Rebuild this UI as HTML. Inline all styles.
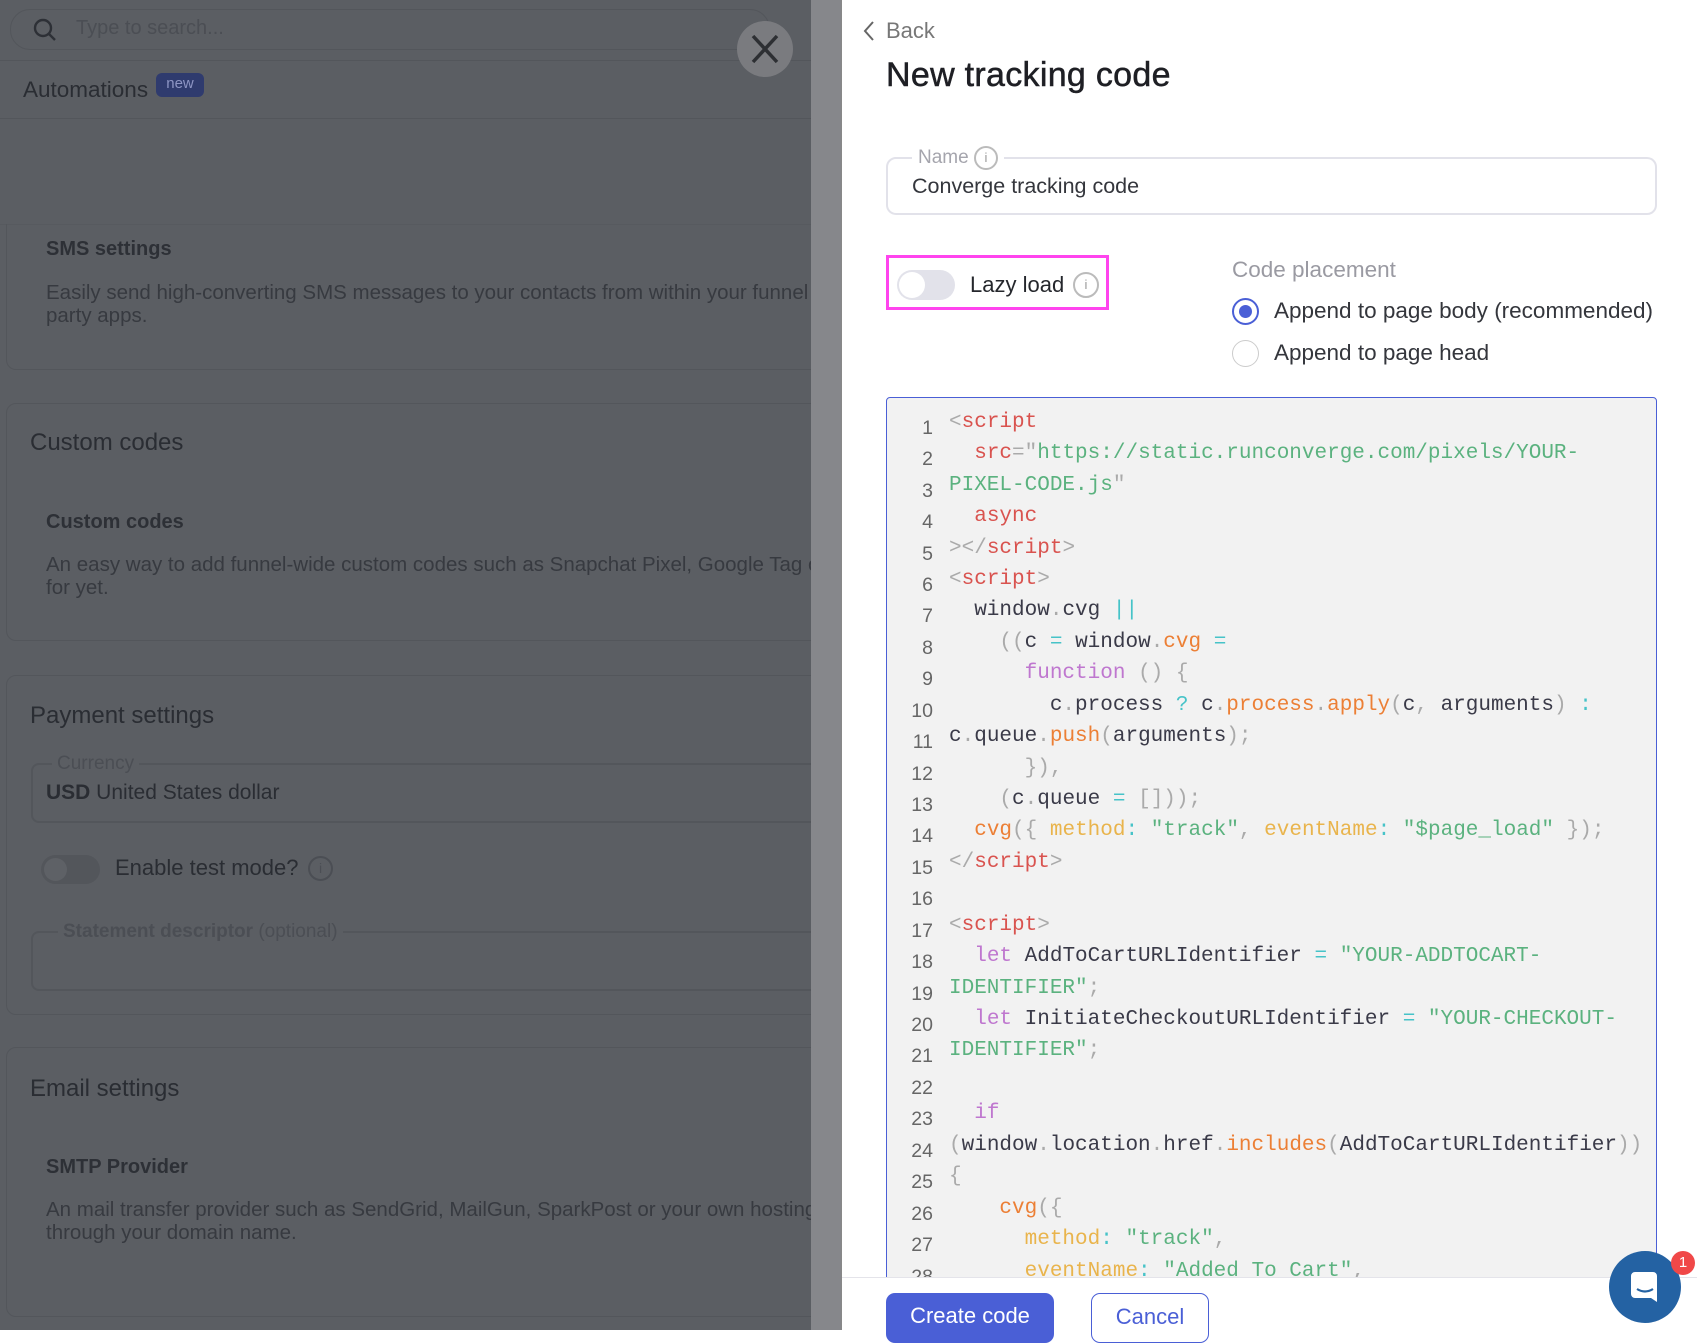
<!DOCTYPE html>
<html style="background:#fff"><head><meta charset="utf-8"><style>
*{margin:0;padding:0;box-sizing:border-box}
body{width:1697px;height:1330px;overflow:hidden;position:relative;font-family:"Liberation Sans",sans-serif;background:#5b5e63}
.a{position:absolute;white-space:nowrap}
.ov{position:absolute;left:0;top:0;width:811px;height:1330px;background:#5b5e63;color:#2d3036}
.card{position:absolute;left:6px;width:830px;border:1px solid #53565b;border-radius:10px}
.strip{position:absolute;left:811px;top:0;width:30px;height:1330px;background:#86878b}
.panel{position:absolute;left:841px;top:0;width:856px;height:1330px;background:#fff;border-left:1px solid #888}
.code{position:absolute;left:886px;top:397px;width:771px;height:900px;background:#f2f2f2;border:1px solid #4a5fd6;border-radius:4px;overflow:hidden}
.ln{position:absolute;left:0;width:46px;text-align:right;color:#666;font-size:19.5px;font-family:"Liberation Sans",sans-serif}
.cl{position:absolute;left:62px;font-family:"Liberation Mono",monospace;font-size:21px;color:#3a3a48;white-space:pre}
.t{color:#d9534f}.p{color:#aaa}.s{color:#5bb27f}.k{color:#bf77cf}.o{color:#ec7f35}.y{color:#e9b44c}.c{color:#46c3c8}
</style></head><body>
<div class="ov">
 <div class="a" style="left:10px;top:9px;width:760px;height:41px;border:1px solid #53565b;border-radius:20px"></div>
 <svg class="a" style="left:32px;top:17px" width="26" height="26" viewBox="0 0 26 26"><circle cx="11" cy="11" r="8" fill="none" stroke="#2d3036" stroke-width="2.4"/><path d="M17 17l6 6" stroke="#2d3036" stroke-width="2.4"/></svg>
 <div class="a" style="top:17px;font-size:20px;color:#4b4e54;left:76px">Type to search...</div>
 <div class="a" style="left:0;top:60px;width:811px;border-top:1px solid #53565b"></div>
 <div class="a" style="left:23px;top:77px;font-size:22.5px;color:#2a2d33">Automations</div>
 <div class="a" style="left:156px;top:73px;width:48px;height:24px;border-radius:6px;background:#2f3b6e;color:#8d95c3;font-size:15px;text-align:center;line-height:22px">new</div>
 <div class="a" style="left:0;top:118px;width:811px;border-top:1px solid #53565b"></div>
 <div class="a" style="left:0;top:224px;width:811px;border-top:1px solid #575a5f"></div>
 <div class="card" style="top:224px;height:146px;border-top:none;border-radius:0 0 10px 10px"></div>
 <div class="a" style="left:46px;top:238px;font-size:20px;font-weight:bold;color:#2d3036">SMS settings</div>
 <div class="a" style="left:46px;top:281px;font-size:20.5px;line-height:23px;color:#373a40">Easily send high-converting SMS messages to your contacts from within your funnel<br>party apps.</div>
 <div class="card" style="top:403px;height:238px"></div>
 <div class="a" style="left:30px;top:429px;font-size:24px;color:#2a2d33">Custom codes</div>
 <div class="a" style="left:46px;top:511px;font-size:20px;font-weight:bold;color:#2d3036">Custom codes</div>
 <div class="a" style="left:46px;top:553px;font-size:20.5px;line-height:23px;color:#373a40">An easy way to add funnel-wide custom codes such as Snapchat Pixel, Google Tag o<br>for yet.</div>
 <div class="card" style="top:675px;height:340px"></div>
 <div class="a" style="left:30px;top:702px;font-size:24px;color:#2a2d33">Payment settings</div>
 <div class="a" style="left:31px;top:763px;width:800px;height:60px;border:2px solid #53565b;border-radius:8px"></div>
 <div class="a" style="left:52px;top:753px;font-size:19px;color:#4b4e54;background:#5b5e63;padding:0 5px">Currency</div>
 <div class="a" style="left:46px;top:781px;font-size:21px;color:#2a2d33"><b>USD</b> United States dollar</div>
 <div class="a" style="left:41px;top:855px;width:59px;height:29px;border-radius:15px;background:#53565b"></div>
 <div class="a" style="left:44px;top:858px;width:23px;height:23px;border-radius:50%;background:#5e6166"></div>
 <div class="a" style="left:115px;top:855px;font-size:22px;color:#2a2d33">Enable test mode?</div>
 <div class="a" style="left:308px;top:856px;width:25px;height:25px;border:2px solid #4b4e54;border-radius:50%;font-size:14px;text-align:center;line-height:21px;color:#4b4e54">i</div>
 <div class="a" style="left:31px;top:931px;width:800px;height:60px;border:2px solid #53565b;border-radius:8px"></div>
 <div class="a" style="left:58px;top:921px;font-size:19px;color:#4b4e54;background:#5b5e63;padding:0 5px;font-weight:bold">Statement descriptor <span style="font-weight:normal">(optional)</span></div>
 <div class="card" style="top:1047px;height:270px"></div>
 <div class="a" style="left:30px;top:1075px;font-size:24px;color:#2a2d33">Email settings</div>
 <div class="a" style="left:46px;top:1156px;font-size:20px;font-weight:bold;color:#2d3036">SMTP Provider</div>
 <div class="a" style="left:46px;top:1198px;font-size:20.5px;line-height:23px;color:#373a40">An mail transfer provider such as SendGrid, MailGun, SparkPost or your own hosting<br>through your domain name.</div>
 <div class="a" style="left:737px;top:21px;width:56px;height:56px;border-radius:50%;background:#7a7b7f"></div>
 <svg class="a" style="left:747px;top:31px" width="36" height="36" viewBox="0 0 36 36"><path d="M6 5L30 31M30 5L6 31" stroke="#2d2f33" stroke-width="3.5"/></svg>
</div>
<div class="strip"></div>
<div class="panel"></div>
<svg class="a" style="left:862px;top:20px" width="14" height="22" viewBox="0 0 14 22"><path d="M11 2L3 11l8 9" fill="none" stroke="#666" stroke-width="2"/></svg>
<div class="a" style="left:886px;top:18px;font-size:22px;color:#777">Back</div>
<div class="a" style="left:886px;top:56px;font-size:34px;color:#1e1f24;letter-spacing:0.3px;-webkit-text-stroke:0.5px #1e1f24">New tracking code</div>
<div class="a" style="left:886px;top:157px;width:771px;height:58px;border:2px solid #e2e2ea;border-radius:10px"></div>
<div class="a" style="left:912px;top:146px;background:#fff;padding:0 6px;font-size:19px;color:#a5a5ad">Name <span style="display:inline-block;width:24px;height:24px;border:2px solid #bbb;border-radius:50%;font-size:13px;text-align:center;line-height:20px;vertical-align:middle;color:#999">i</span></div>
<div class="a" style="left:912px;top:174px;font-size:21.5px;color:#34363c">Converge tracking code</div>
<div class="a" style="left:886px;top:255px;width:223px;height:55px;border:3px solid #ff44ee"></div>
<div class="a" style="left:897px;top:270px;width:58px;height:30px;border-radius:15px;background:#e2e2ea"></div>
<div class="a" style="left:899px;top:272px;width:26px;height:26px;border-radius:50%;background:#fff"></div>
<div class="a" style="left:970px;top:272px;font-size:22px;color:#25272c">Lazy load</div>
<div class="a" style="left:1073px;top:272px;width:26px;height:26px;border:2px solid #bbb;border-radius:50%;font-size:13px;text-align:center;line-height:22px;color:#999">i</div>
<div class="a" style="left:1232px;top:257px;font-size:22.5px;color:#9a9aa2">Code placement</div>
<div class="a" style="left:1232px;top:298px;width:27px;height:27px;border:2px solid #4a5fd6;border-radius:50%"></div>
<div class="a" style="left:1239px;top:305px;width:13px;height:13px;border-radius:50%;background:#4a5fd6"></div>
<div class="a" style="left:1274px;top:298px;font-size:22.5px;color:#34363c">Append to page body (recommended)</div>
<div class="a" style="left:1232px;top:340px;width:27px;height:27px;border:1.5px solid #ccc;border-radius:50%"></div>
<div class="a" style="left:1274px;top:340px;font-size:22.5px;color:#34363c">Append to page head</div>
<div class="code">
<div class="ln" style="top:19px">1</div><div class="cl" style="top:13px"><span class="p">&lt;</span><span class="t">script</span></div>
<div class="ln" style="top:50px">2</div><div class="cl" style="top:44px">  <span class="t">src</span><span class="p">="</span><span class="s">https://static.runconverge.com/pixels/YOUR-</span></div>
<div class="ln" style="top:82px">3</div><div class="cl" style="top:76px"><span class="s">PIXEL-CODE.js</span><span class="p">"</span></div>
<div class="ln" style="top:113px">4</div><div class="cl" style="top:107px">  <span class="t">async</span></div>
<div class="ln" style="top:145px">5</div><div class="cl" style="top:139px"><span class="p">&gt;&lt;/</span><span class="t">script</span><span class="p">&gt;</span></div>
<div class="ln" style="top:176px">6</div><div class="cl" style="top:170px"><span class="p">&lt;</span><span class="t">script</span><span class="p">&gt;</span></div>
<div class="ln" style="top:207px">7</div><div class="cl" style="top:201px">  window<span class="p">.</span>cvg <span class="c">||</span></div>
<div class="ln" style="top:239px">8</div><div class="cl" style="top:233px">    <span class="p">((</span>c <span class="c">=</span> window<span class="p">.</span><span class="o">cvg</span> <span class="c">=</span></div>
<div class="ln" style="top:270px">9</div><div class="cl" style="top:264px">      <span class="k">function</span> <span class="p">() {</span></div>
<div class="ln" style="top:302px">10</div><div class="cl" style="top:296px">        c<span class="p">.</span>process <span class="c">?</span> c<span class="p">.</span><span class="o">process</span><span class="p">.</span><span class="o">apply</span><span class="p">(</span>c<span class="p">,</span> arguments<span class="p">)</span> <span class="c">:</span></div>
<div class="ln" style="top:333px">11</div><div class="cl" style="top:327px">c<span class="p">.</span>queue<span class="p">.</span><span class="o">push</span><span class="p">(</span>arguments<span class="p">);</span></div>
<div class="ln" style="top:365px">12</div><div class="cl" style="top:359px">      <span class="p">}),</span></div>
<div class="ln" style="top:396px">13</div><div class="cl" style="top:390px">    <span class="p">(</span>c<span class="p">.</span>queue <span class="c">=</span> <span class="p">[]));</span></div>
<div class="ln" style="top:427px">14</div><div class="cl" style="top:421px">  <span class="o">cvg</span><span class="p">({</span> <span class="y">method</span><span class="c">:</span> <span class="s">"track"</span><span class="p">,</span> <span class="y">eventName</span><span class="c">:</span> <span class="s">"$page_load"</span> <span class="p">});</span></div>
<div class="ln" style="top:459px">15</div><div class="cl" style="top:453px"><span class="p">&lt;/</span><span class="t">script</span><span class="p">&gt;</span></div>
<div class="ln" style="top:490px">16</div>
<div class="ln" style="top:522px">17</div><div class="cl" style="top:516px"><span class="p">&lt;</span><span class="t">script</span><span class="p">&gt;</span></div>
<div class="ln" style="top:553px">18</div><div class="cl" style="top:547px">  <span class="k">let</span> AddToCartURLIdentifier <span class="c">=</span> <span class="s">"YOUR-ADDTOCART-</span></div>
<div class="ln" style="top:585px">19</div><div class="cl" style="top:579px"><span class="s">IDENTIFIER"</span><span class="p">;</span></div>
<div class="ln" style="top:616px">20</div><div class="cl" style="top:610px">  <span class="k">let</span> InitiateCheckoutURLIdentifier <span class="c">=</span> <span class="s">"YOUR-CHECKOUT-</span></div>
<div class="ln" style="top:647px">21</div><div class="cl" style="top:641px"><span class="s">IDENTIFIER"</span><span class="p">;</span></div>
<div class="ln" style="top:679px">22</div>
<div class="ln" style="top:710px">23</div><div class="cl" style="top:704px">  <span class="k">if</span></div>
<div class="ln" style="top:742px">24</div><div class="cl" style="top:736px"><span class="p">(</span>window<span class="p">.</span>location<span class="p">.</span>href<span class="p">.</span><span class="o">includes</span><span class="p">(</span>AddToCartURLIdentifier<span class="p">))</span></div>
<div class="ln" style="top:773px">25</div><div class="cl" style="top:767px"><span class="p">{</span></div>
<div class="ln" style="top:805px">26</div><div class="cl" style="top:799px">    <span class="o">cvg</span><span class="p">({</span></div>
<div class="ln" style="top:836px">27</div><div class="cl" style="top:830px">      <span class="y">method</span><span class="c">:</span> <span class="s">"track"</span><span class="p">,</span></div>
<div class="ln" style="top:868px">28</div><div class="cl" style="top:862px">      <span class="y">eventName</span><span class="c">:</span> <span class="s">"Added To Cart"</span><span class="p">,</span></div>
</div>
<div class="a" style="left:842px;top:1277px;width:855px;height:53px;background:#fff;border-top:1px solid #e4e4ea"></div>
<div class="a" style="left:886px;top:1293px;width:168px;height:50px;border-radius:9px;background:#4a5fd6;color:#fff;font-size:22px;text-align:center;line-height:46px">Create code</div>
<div class="a" style="left:1091px;top:1293px;width:118px;height:50px;border-radius:9px;border:1.5px solid #4a5fd6;color:#4a5fd6;font-size:22px;text-align:center;line-height:46px;background:#fff">Cancel</div>
<div class="a" style="left:1609px;top:1251px;width:72px;height:72px;border-radius:50%;background:#2462a3"></div>
<svg class="a" style="left:1622px;top:1264px" width="46" height="46" viewBox="0 0 46 46"><path d="M13 8h18a4 4 0 0 1 4 4v26l-6-4H13a4 4 0 0 1-4-4V12a4 4 0 0 1 4-4z" fill="#fff"/><path d="M15 25q8 5 16 0" fill="none" stroke="#2462a3" stroke-width="2.2"/></svg>
<div class="a" style="left:1671px;top:1251px;width:24px;height:24px;border-radius:50%;background:#f04848;color:#fff;font-size:15px;text-align:center;line-height:24px">1</div>
</body></html>
